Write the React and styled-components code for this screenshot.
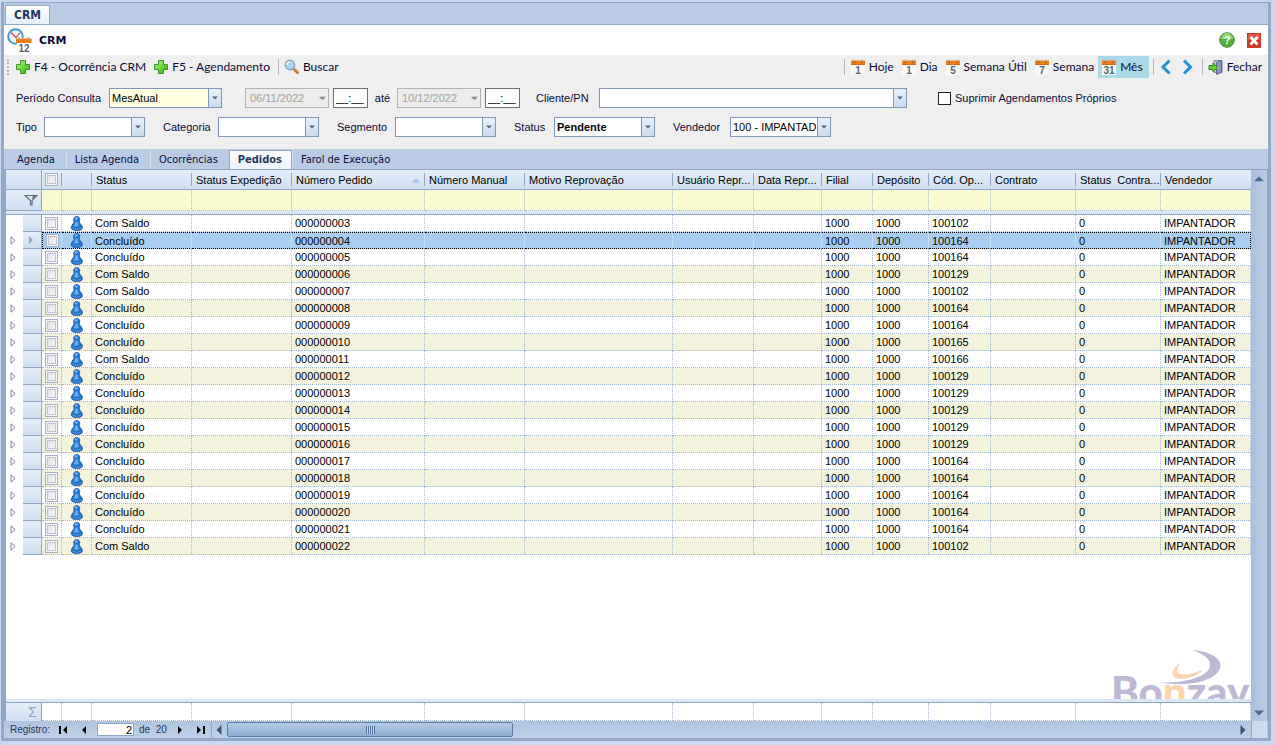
import React, { useState } from "react";
import styled, { createGlobalStyle, css } from "styled-components";

const COLUMNS = [
  { key: "expand", width: 17 },
  { key: "marker", width: 19 },
  { key: "check", width: 20 },
  { key: "icon", width: 30 },
  { key: "status", width: 100, title: "Status" },
  { key: "expedicao", width: 100, title: "Status Expedição" },
  { key: "pedido", width: 133, title: "Número Pedido", sorted: true },
  { key: "manual", width: 100, title: "Número Manual" },
  { key: "motivo", width: 148, title: "Motivo Reprovação" },
  { key: "usuario", width: 81, title: "Usuário Repr..." },
  { key: "data", width: 68, title: "Data Repr..." },
  { key: "filial", width: 51, title: "Filial" },
  { key: "deposito", width: 56, title: "Depósito" },
  { key: "operacao", width: 62, title: "Cód. Op..." },
  { key: "contrato", width: 85, title: "Contrato" },
  { key: "statusContrato", width: 85, title: "Status  Contra..." },
  { key: "vendedor", title: "Vendedor" },
];

const DATA_COLUMNS = COLUMNS.slice(4);

const ORDERS = [
  ["000000003", "Com Saldo", "100102"],
  ["000000004", "Concluído", "100164"],
  ["000000005", "Concluído", "100164"],
  ["000000006", "Com Saldo", "100129"],
  ["000000007", "Com Saldo", "100102"],
  ["000000008", "Concluído", "100164"],
  ["000000009", "Concluído", "100164"],
  ["000000010", "Concluído", "100165"],
  ["000000011", "Com Saldo", "100166"],
  ["000000012", "Concluído", "100129"],
  ["000000013", "Concluído", "100129"],
  ["000000014", "Concluído", "100129"],
  ["000000015", "Concluído", "100129"],
  ["000000016", "Concluído", "100129"],
  ["000000017", "Concluído", "100164"],
  ["000000018", "Concluído", "100164"],
  ["000000019", "Concluído", "100164"],
  ["000000020", "Concluído", "100164"],
  ["000000021", "Concluído", "100164"],
  ["000000022", "Com Saldo", "100102"],
].map(([pedido, status, operacao]) => ({
  pedido,
  status,
  operacao,
  filial: "1000",
  deposito: "1000",
  statusContrato: "0",
  vendedor: "IMPANTADOR",
}));

const TABS = ["Agenda", "Lista Agenda", "Ocorrências", "Pedidos", "Farol de Execução"];

const VIEWS = [
  { label: "Hoje", day: "1" },
  { label: "Dia", day: "1" },
  { label: "Semana Útil", day: "5" },
  { label: "Semana", day: "7" },
  { label: "Mês", day: "31" },
];

/* ---------- icons ---------- */

const PlusIcon = () => (
  <svg width="16" height="16" viewBox="0 0 16 16" aria-hidden="true">
    <defs>
      <linearGradient id="plus" x1="0" y1="0" x2="1" y2="1">
        <stop offset="0" stopColor="#c4f590" />
        <stop offset="0.5" stopColor="#6bd838" />
        <stop offset="1" stopColor="#35ab1a" />
      </linearGradient>
    </defs>
    <path
      d="M5.500 1.500h5v4h4v5h-4v4h-5v-4h-4v-5h4z"
      fill="url(#plus)"
      stroke="#3a9427"
      strokeLinejoin="round"
    />
  </svg>
);

const SearchIcon = () => (
  <svg width="16" height="16" viewBox="0 0 16 16" aria-hidden="true">
    <path d="M9.500 9.500l4 4" stroke="#c9772b" strokeWidth="3" strokeLinecap="round" />
    <path d="M9.500 9l3.500 3.500" stroke="#f3b56c" strokeWidth="1" />
    <circle cx="6" cy="6" r="4.700" fill="#a9d8f5" stroke="#8aa6c0" strokeWidth="1.400" />
    <path d="M3 6a3 3 0 0 1 3-3" fill="none" stroke="#fff" strokeWidth="1.400" />
  </svg>
);

const CalendarIcon = ({ day }) => (
  <svg width="16" height="16" viewBox="0 0 16 16" aria-hidden="true">
    <path d="M1 6h14v10H1z" fill="#f8f8f6" />
    <path d="M1 1.500h14V6H1z" fill="#ef7d1a" />
    <path d="M1 5h14v1H1z" fill="#d86a10" />
    <path d="M3.500 0v3M12.500 0v3" stroke="#cfc6bb" strokeWidth="1.200" />
    <path d="M3 3h2M11 3h2" stroke="#8c420a" />
    <text
      x="8"
      y="15"
      textAnchor="middle"
      fontFamily="Liberation Sans, sans-serif"
      fontWeight="bold"
      fontSize="10"
      fill="#5c6670"
    >
      {day}
    </text>
  </svg>
);

const CrmIcon = () => (
  <svg width="25" height="25" viewBox="0 0 25 25" aria-hidden="true">
    <circle cx="8.500" cy="8.500" r="7.300" fill="#eef7fd" stroke="#3f9bd8" strokeWidth="2" />
    <path d="M4 4.500l5 5 4-5" fill="none" stroke="#d8434e" strokeWidth="1.200" />
    <path d="M10 10h15v15H10z" fill="#fff" />
    <path d="M9 10.500h15.500V15H9z" fill="#ee7b19" />
    <path d="M12 9v3M21.500 9v3" stroke="#b9a08a" strokeWidth="1.500" />
    <text
      x="17"
      y="24"
      textAnchor="middle"
      fontFamily="Liberation Sans, sans-serif"
      fontWeight="bold"
      fontSize="10"
      fill="#59636e"
    >
      12
    </text>
  </svg>
);

const ChevronIcon = ({ next }) => (
  <svg width="14" height="16" viewBox="0 0 14 16" aria-hidden="true">
    <path
      d={next ? "M4 1.500L10.500 8 4 14.500" : "M10.500 1.500L4 8l6.500 6.500"}
      fill="none"
      stroke="#1c93dc"
      strokeWidth="3"
    />
  </svg>
);

const ExitIcon = () => (
  <svg width="16" height="16" viewBox="0 0 16 16" aria-hidden="true">
    <path d="M6 1.500h8v12H6z" fill="#c5cbe0" stroke="#7a84a6" />
    <path d="M8.500 3.500l5-2v12l-5 2z" fill="#8c97c2" stroke="#5b6693" />
    <circle cx="10" cy="9" r="0.800" fill="#f2e7a0" />
    <path d="M1 6.500h4V4l4.500 4.500L5 13v-2.500H1z" fill="#5fd02c" stroke="#2b8d19" />
  </svg>
);

const HelpIcon = () => (
  <svg width="16" height="16" viewBox="0 0 16 16" aria-hidden="true">
    <circle cx="8" cy="8" r="7.300" fill="#51b035" stroke="#5c7d55" />
    <path d="M2 7a6 6 0 0 1 12 0z" fill="#8ed873" />
    <text
      x="8"
      y="12"
      textAnchor="middle"
      fontFamily="Liberation Sans, sans-serif"
      fontWeight="bold"
      fontSize="11"
      fill="#fff"
    >
      ?
    </text>
  </svg>
);

const CloseIcon = () => (
  <svg width="14" height="15" viewBox="0 0 14 15" aria-hidden="true">
    <path d="M0 0h14v15H0z" fill="#c83a2c" />
    <path d="M1 1h12v6H1z" fill="#d8574a" />
    <path d="M3.500 4l7 7.500M10.500 4l-7 7.500" stroke="#fff" strokeWidth="2.600" />
  </svg>
);

const PawnIcon = () => (
  <svg width="14" height="15" viewBox="0 0 14 15" aria-hidden="true">
    <path
      d="M3.800 4.500C3 2.200 4.500.500 6.700.500s3.700 1.700 2.900 4c-.5 1.300 0 2.500 1 3.500 1.300 1.300 1.800 2.400 1.800 3.900 0 1.700-2.500 2.600-5.500 2.600s-5.700-.9-5.700-2.600c0-1.500.6-2.600 1.700-3.900 1-1.100 1.300-2.300.9-3.500z"
      fill="#2273cf"
      stroke="#1b4f91"
      strokeWidth="0.700"
    />
    <ellipse cx="6.200" cy="2.500" rx="1.700" ry="1.200" fill="#6db0f0" />
    <path d="M5.300 5.500h2.400l1 4.500c-1.500 1-3.600 1-5 0 1-1.500 1.500-3 1.600-4.500z" fill="#62adf2" />
    <path d="M2.500 12c2 1.500 6.500 1.500 8.500 0" fill="none" stroke="#4f9ae3" />
  </svg>
);

const FilterIcon = () => (
  <svg width="14" height="12" viewBox="0 0 14 12" aria-hidden="true">
    <path d="M1 1.500h12L8 6.500V11H6.500V6.500z" fill="#dfe8f2" stroke="#66707f" strokeWidth="1.200" />
    <path d="M9 1.500h3.500L8 6z" fill="#66707f" />
  </svg>
);

const ExpandIcon = () => (
  <svg width="6" height="9" viewBox="0 0 6 9" aria-hidden="true">
    <path d="M1 0.800l4 3.700-4 3.700z" fill="#fff" stroke="#7d8794" />
  </svg>
);

const Triangle = ({ dir, color = "#000", size = 8 }) => {
  const paths = {
    up: "M0 6.500L4 2.500l4 4z",
    down: "M0 2L4 6l4-4z",
    left: "M6 0L2 4l4 4z",
    right: "M2 0l4 4-4 4z",
    first: "M0 0h2v8H0zM8 0L4 4l4 4z",
    last: "M6 0h2v8H6zM0 0l4 4-4 4z",
  };
  return (
    <svg width={size} height={size} viewBox="0 0 8 8" aria-hidden="true">
      <path d={paths[dir]} fill={color} />
    </svg>
  );
};

const Watermark = () => (
  <WatermarkSvg width="141" height="51" viewBox="0 0 141 51">
    <path
      d="M82 2c17 1 29 8 28.500 16C109 31 84 40 50 34.500 76 35 98 29 100 18 101 11 94 6 82 2z"
      fill="#bdb9d5"
    />
    <path d="M71 14c-6 5-9 9-8.500 12 1 8 21 6 31.500-5-10 5-21 7-25.500 4-2.500-2-1-6 2.500-11z" fill="#fbd3ad" />
    <text x="1" y="59" fontFamily="Lato, sans-serif" fontWeight="900" fontSize="42" fill="#bdb9d5">
      Bo<tspan fill="#fbd3ad">n</tspan>zay
    </text>
  </WatermarkSvg>
);

/* ---------- page ---------- */

const Combo = ({ id, value, width, tone, bold }) => (
  <ComboBox $width={width}>
    <ComboSelect id={id} defaultValue={value} $tone={tone} $bold={bold}>
      <option>{value}</option>
    </ComboSelect>
    <ComboArrow>
      <Triangle dir="down" color="#5b6675" size={6} />
    </ComboArrow>
  </ComboBox>
);

const DateTime = ({ name, date }) => (
  <DatePair>
    <ComboBox $width={84}>
      <DateInput aria-label={`Data ${name}`} defaultValue={date} disabled />
      <ComboArrow $plain>
        <Triangle dir="down" color="#8a8a8a" size={7} />
      </ComboArrow>
    </ComboBox>
    <TimeInput aria-label={`Hora ${name}`} defaultValue="__:__" />
  </DatePair>
);

const Grid = () => {
  const [selected, setSelected] = useState("000000004");

  return (
    <Table>
      <colgroup>
        {COLUMNS.map((col) => (
          <Col key={col.key} $width={col.width} />
        ))}
      </colgroup>
      <thead>
        <tr>
          <CornerHead colSpan={2} />
          <HeadCell>
            <HeadText $tight>
              <GridCheck type="checkbox" aria-label="Selecionar todos" />
            </HeadText>
          </HeadCell>
          <HeadCell>
            <HeadText />
          </HeadCell>
          {DATA_COLUMNS.map((col) => (
            <HeadCell key={col.key}>
              <HeadText>
                <span>{col.title}</span>
                {col.sorted && <Triangle dir="up" color="#9cc0ea" />}
              </HeadText>
            </HeadCell>
          ))}
        </tr>
        <tr>
          <FilterHead colSpan={2}>
            <FilterIcon />
          </FilterHead>
          {COLUMNS.slice(2).map((col) => (
            <FilterCell key={col.key} />
          ))}
        </tr>
        <tr>
          <Splitter colSpan={COLUMNS.length} />
        </tr>
      </thead>
      <tbody>
        {ORDERS.map((order, index) => (
          <Row
            key={order.pedido}
            $selected={order.pedido === selected}
            onClick={() => setSelected(order.pedido)}
          >
            <ExpandCell>{index > 0 && <ExpandIcon />}</ExpandCell>
            <MarkerCell>
              {order.pedido === selected && <Triangle dir="right" color="#8ea6c4" />}
            </MarkerCell>
            <Cell $center>
              <GridCheck type="checkbox" aria-label={`Selecionar ${order.pedido}`} />
            </Cell>
            <Cell $center>
              <PawnIcon />
            </Cell>
            {DATA_COLUMNS.map((col) => (
              <Cell key={col.key}>{order[col.key]}</Cell>
            ))}
          </Row>
        ))}
      </tbody>
    </Table>
  );
};

const Summary = () => (
  <Table>
    <colgroup>
      {COLUMNS.map((col) => (
        <Col key={col.key} $width={col.width} />
      ))}
    </colgroup>
    <tbody>
      <tr>
        <SigmaCell colSpan={2}>Σ</SigmaCell>
        {COLUMNS.slice(2).map((col) => (
          <SummaryCell key={col.key} />
        ))}
      </tr>
    </tbody>
  </Table>
);

const App = () => {
  const [tab, setTab] = useState("Pedidos");
  const [view, setView] = useState("Mês");

  return (
    <Page>
      <GlobalStyle />
      <Frame>
        <WindowTabs>
          <WindowTab>CRM</WindowTab>
        </WindowTabs>

        <TitleBar>
          <CrmIcon />
          <Title>CRM</Title>
          <IconButton aria-label="Ajuda">
            <HelpIcon />
          </IconButton>
          <IconButton aria-label="Fechar janela">
            <CloseIcon />
          </IconButton>
        </TitleBar>

        <Toolbar>
          <Grip />
          <ToolButton>
            <PlusIcon />
            F4 - Ocorrência CRM
          </ToolButton>
          <ToolButton>
            <PlusIcon />
            F5 - Agendamento
          </ToolButton>
          <Separator />
          <ToolButton>
            <SearchIcon />
            Buscar
          </ToolButton>
          <Push />
          <Separator />
          {VIEWS.map(({ label, day }) => (
            <ToolButton key={label} $active={label === view} onClick={() => setView(label)}>
              <CalendarIcon day={day} />
              {label}
            </ToolButton>
          ))}
          <Separator />
          <ToolButton aria-label="Anterior">
            <ChevronIcon />
          </ToolButton>
          <ToolButton aria-label="Próximo">
            <ChevronIcon next />
          </ToolButton>
          <Separator />
          <ToolButton>
            <ExitIcon />
            Fechar
          </ToolButton>
        </Toolbar>

        <Filters>
          <FilterRow $gap={16}>
            <Field>
              <Label htmlFor="periodo" $width={93}>
                Período Consulta
              </Label>
              <Combo id="periodo" value="MesAtual" width={113} tone="#ffffe1" />
            </Field>
            <Dates>
              <DateTime name="inicial" date="06/11/2022" />
              <Until>até</Until>
              <DateTime name="final" date="10/12/2022" />
            </Dates>
            <Field>
              <Label htmlFor="cliente" $width={63}>
                Cliente/PN
              </Label>
              <Combo id="cliente" value="" width={308} />
            </Field>
            <CheckLabel>
              <CheckInput type="checkbox" />
              Suprimir Agendamentos Próprios
            </CheckLabel>
          </FilterRow>
          <FilterRow $gap={18}>
            <Field>
              <Label htmlFor="tipo" $width={28}>
                Tipo
              </Label>
              <Combo id="tipo" value="" width={101} />
            </Field>
            <Field>
              <Label htmlFor="categoria" $width={55}>
                Categoria
              </Label>
              <Combo id="categoria" value="" width={101} />
            </Field>
            <Field>
              <Label htmlFor="segmento" $width={58}>
                Segmento
              </Label>
              <Combo id="segmento" value="" width={101} />
            </Field>
            <Field>
              <Label htmlFor="status" $width={40}>
                Status
              </Label>
              <Combo id="status" value="Pendente" width={101} bold />
            </Field>
            <Field>
              <Label htmlFor="vendedor" $width={57}>
                Vendedor
              </Label>
              <Combo id="vendedor" value="100 - IMPANTADOR" width={101} />
            </Field>
          </FilterRow>
        </Filters>

        <Tabs role="tablist">
          {TABS.map((name) => (
            <Tab
              key={name}
              role="tab"
              aria-selected={name === tab}
              $active={name === tab}
              onClick={() => setTab(name)}
            >
              {name}
            </Tab>
          ))}
        </Tabs>

        <GridArea>
          <GridMain>
            <GridBody>
              <Grid />
              <Watermark />
            </GridBody>
            <SummaryGap />
            <Summary />
          </GridMain>
          <VerticalScroll>
            <Triangle dir="up" color="#536d95" size={10} />
            <Triangle dir="down" color="#536d95" size={10} />
          </VerticalScroll>
        </GridArea>

        <BottomBar>
          <Navigator>
            <NavText as="label" htmlFor="registro">
              Registro:
            </NavText>
            <NavButton aria-label="Primeiro">
              <Triangle dir="first" />
            </NavButton>
            <NavButton aria-label="Anterior">
              <Triangle dir="left" />
            </NavButton>
            <PageInput id="registro" defaultValue="2" />
            <NavText>de&nbsp; 20</NavText>
            <NavButton aria-label="Próximo">
              <Triangle dir="right" />
            </NavButton>
            <NavButton aria-label="Último">
              <Triangle dir="last" />
            </NavButton>
          </Navigator>
          <HorizontalScroll>
            <Triangle dir="left" color="#3d5373" size={10} />
            <Thumb>
              <ThumbGrip />
            </Thumb>
            <Push />
            <Triangle dir="right" color="#3d5373" size={10} />
          </HorizontalScroll>
          <Corner />
        </BottomBar>
      </Frame>
    </Page>
  );
};

export default App;

const GlobalStyle = createGlobalStyle`
  * {
    box-sizing: border-box;
  }

  body {
    margin: 0;
    background: #c8d9ef;
    color: #0b0b3b;
    font: 11px/16px "Liberation Sans", Arial, sans-serif;
  }

  button, input, select {
    margin: 0;
    font: inherit;
    color: inherit;
  }

  button {
    padding: 0;
    border: 0;
    background: none;
  }

  svg {
    display: block;
    flex: none;
  }
`;

const Page = styled.div`
  display: flex;
  min-height: 100vh;
  padding: 2px 4px 4px 1px;
`;

const Frame = styled.main`
  display: flex;
  flex: 1;
  flex-direction: column;
  min-width: 0;
  border: 3px solid #93a8c7;
  border-top-width: 1px;
  background: #bacce4;
`;

const WindowTabs = styled.div`
  display: flex;
  align-items: flex-end;
  height: 22px;
  padding-left: 1px;
  border-bottom: 1px solid #8fa6c4;
`;

const WindowTab = styled.div`
  height: 19px;
  padding: 0 8px;
  border: 1px solid #8fa6c4;
  border-bottom: 0;
  border-radius: 2px 2px 0 0;
  background: linear-gradient(#fff, #e4eefa);
  color: #1e395b;
  font: bold 12px/19px "DejaVu Sans Condensed", "DejaVu Sans", sans-serif;
`;

const TitleBar = styled.header`
  display: flex;
  align-items: center;
  gap: 7px;
  height: 30px;
  padding: 0 7px 0 3px;
  background: #fff;
`;

const Title = styled.h1`
  flex: 1;
  margin: 0;
  padding-top: 2px;
  font: bold 11px/16px "DejaVu Sans", sans-serif;
`;

const IconButton = styled.button`
  display: flex;
  margin-left: 5px;
`;

const Toolbar = styled.div`
  display: flex;
  align-items: center;
  height: 25px;
  padding: 0 2px 2px 3px;
  background: #efefef;
`;

const Grip = styled.div`
  width: 3px;
  height: 16px;
  margin-right: 2px;
  border-left: 2px dotted #b4b4b4;
`;

const ToolButton = styled.button`
  display: flex;
  align-items: center;
  gap: 3px;
  height: 22px;
  padding: 0 4px 0 3px;
  background: ${(props) => (props.$active ? "#add8e6" : "none")};
  font: 12px/16px Lato, "Open Sans", sans-serif;
  white-space: nowrap;

  ${(props) =>
    props.$active &&
    css`
      padding-right: 6px;
    `}
`;

const Separator = styled.div`
  width: 1px;
  height: 16px;
  margin: 0 2px 0 4px;
  background: #b5b5b8;
`;

const Push = styled.div`
  flex: 1;
`;

const Filters = styled.section`
  display: flex;
  flex-direction: column;
  gap: 9px;
  height: 69px;
  padding: 8px 12px;
  background: #efefef;
`;

const FilterRow = styled.div`
  display: flex;
  align-items: center;
  gap: ${(props) => props.$gap}px;
  height: 20px;
`;

const Field = styled.div`
  display: flex;
  align-items: center;
`;

const Label = styled.label`
  flex: none;
  width: ${(props) => props.$width}px;
`;

const ComboBox = styled.div`
  position: relative;
  width: ${(props) => props.$width}px;
  height: 20px;
`;

const ComboSelect = styled.select`
  appearance: none;
  display: block;
  width: 100%;
  height: 20px;
  padding: 0 14px 0 2px;
  border: 1px solid #7f97ba;
  border-radius: 0;
  background: ${(props) => props.$tone || "#fff"};
  color: #000;
  font-weight: ${(props) => (props.$bold ? "bold" : "normal")};
`;

const ComboArrow = styled.span`
  position: absolute;
  top: 0;
  right: 0;
  display: flex;
  align-items: center;
  justify-content: center;
  width: 14px;
  height: 20px;
  border: 1px solid #7f97ba;
  border-radius: 0 2px 2px 0;
  background: linear-gradient(#e9f1fb, #c9dbf0);
  pointer-events: none;

  ${(props) =>
    props.$plain &&
    css`
      border: 0;
      background: none;
    `}
`;

const DatePair = styled.div`
  display: flex;
  gap: 4px;
`;

const Dates = styled.div`
  display: flex;
  align-items: center;
  padding-left: 7px;
`;

const Until = styled.span`
  width: 29px;
  text-align: center;
`;

const DateInput = styled.input`
  width: 100%;
  height: 20px;
  padding: 0 4px;
  border: 1px solid #b0b4ba;
  background: #ececec;
  color: #a3a3a0;
`;

const TimeInput = styled.input`
  width: 35px;
  height: 20px;
  padding: 0 2px;
  border: 1px solid #6f6f6f;
  background: #fff;
  color: #000;
`;

const CheckLabel = styled.label`
  display: flex;
  align-items: center;
  gap: 4px;
  padding-left: 15px;
  white-space: nowrap;
`;

const CheckInput = styled.input`
  appearance: none;
  width: 13px;
  height: 13px;
  border: 1px solid #222;
  background: #fff;
`;

const Tabs = styled.div`
  display: flex;
  align-items: flex-end;
  height: 21px;
  padding-left: 5px;
  border-bottom: 1px solid #8fa6c4;
`;

const Tab = styled.button`
  height: 19px;
  padding: 0 11px 0 8px;
  font: 11px/18px "DejaVu Sans Condensed", "DejaVu Sans", sans-serif;
  white-space: nowrap;

  & + & {
    border-left: 1px solid #d6e1f0;
  }

  ${(props) =>
    props.$active &&
    css`
      && {
        padding: 0 9px 0 8px;
        border: 1px solid #8fa6c4;
        border-bottom: 0;
      }
      border-radius: 2px 2px 0 0;
      background: linear-gradient(#fff, #eaf2fb);
      color: #1e395b;
      font-weight: bold;
    `}
`;

const GridArea = styled.section`
  display: flex;
  flex: 1;
  padding: 0 1px 0 2px;
  background: #93a8c7;
`;

const GridMain = styled.div`
  display: flex;
  flex: 1;
  flex-direction: column;
  min-width: 0;
  background: #fff;
`;

const GridBody = styled.div`
  position: relative;
  flex: 1;
  overflow: hidden;
`;

const WatermarkSvg = styled.svg`
  position: absolute;
  right: 0;
  bottom: 0;
`;

const Table = styled.table`
  width: 100%;
  table-layout: fixed;
  border-collapse: separate;
  border-spacing: 0;
  color: #000;
`;

const Col = styled.col`
  width: ${(props) => (props.$width ? `${props.$width}px` : "auto")};
`;

const headBackground = css`
  background: linear-gradient(#e4eefa, #cfdff0);
`;

const HeadText = styled.div`
  display: flex;
  align-items: center;
  justify-content: space-between;
  height: 13px;
  padding: ${(props) => (props.$tight ? "0 3px" : "0 4px")};
  border-right: 1px solid #8fa6c4;
`;

const HeadCell = styled.th`
  height: 20px;
  padding: 0;
  border-bottom: 1px solid #8fa6c4;
  ${headBackground}
  font-weight: normal;
  text-align: left;
  white-space: pre;

  &:last-child ${HeadText} {
    border-right: 0;
  }
`;

const CornerHead = styled.th`
  height: 20px;
  padding: 0;
  border-right: 1px solid #8fa6c4;
  border-bottom: 1px solid #8fa6c4;
  ${headBackground}
`;

const FilterHead = styled.th`
  height: 21px;
  padding: 0 0 0 18px;
  border-right: 1px solid #8fa6c4;
  border-bottom: 1px solid #8fa6c4;
  ${headBackground}
`;

const FilterCell = styled.th`
  padding: 0;
  border-right: 1px dotted #9fb9d4;
  border-bottom: 1px dotted #9fb9d4;
  background: #fafad2;
`;

const Splitter = styled.th`
  height: 4px;
  padding: 0;
  border-bottom: 1px solid #8fa6c4;
  background: #dbe7f5;
`;

const Cell = styled.td`
  height: 17px;
  padding: 0 3px;
  border-right: 1px dotted #9fb9d4;
  border-bottom: 1px dotted #9fb9d4;
  line-height: 15px;
  white-space: nowrap;

  & > svg,
  & > input {
    margin: ${(props) => (props.$center ? "0 auto" : "0")};
  }
`;

const ExpandCell = styled.td`
  padding: 0 0 0 4px;
  background: #fff;
`;

const MarkerCell = styled.td`
  padding: 0 0 0 4px;
  border-right: 1px solid #8fa6c4;
  border-bottom: 1px solid #8fa6c4;
  ${headBackground}
`;

const Row = styled.tr`
  height: 17px;
  background: #fff;

  &:nth-child(even) {
    background: #f3f2dd;
  }

  ${(props) =>
    props.$selected &&
    css`
      && {
        background: #a9cdf0;
      }

      ${Cell} {
        border-top: 1px dotted #000;
        border-right-color: #e3f0fc;
        border-bottom-color: #000;
        line-height: 14px;
      }

      ${Cell}:nth-child(3) {
        border-left: 1px dotted #000;
        padding: 0 2px;
      }

      ${Cell}:last-child {
        border-right-color: #000;
      }
    `}
`;

const GridCheck = styled.input`
  appearance: none;
  display: block;
  width: 13px;
  height: 13px;
  margin: 0 auto;
  border: 1px solid #a3b2c8;
  background: linear-gradient(135deg, #dfe0e4, #fafafa);
  box-shadow: inset 0 0 0 1px #f7f7f7, inset 0 0 0 2px #bfc3cf;
`;

const SummaryGap = styled.div`
  height: 4px;
  border-bottom: 1px solid #8fa6c4;
  background: #dbe7f5;
`;

const SigmaCell = styled.td`
  height: 18px;
  padding: 0 4px 0 0;
  border-right: 1px solid #8fa6c4;
  ${headBackground}
  color: #93a4bb;
  font-size: 14px;
  line-height: 16px;
  text-align: right;
`;

const SummaryCell = styled.td`
  padding: 0;
  border-right: 1px dotted #9fb9d4;
  border-bottom: 1px dotted #9fb9d4;
`;

const VerticalScroll = styled.div`
  display: flex;
  flex-direction: column;
  align-items: center;
  justify-content: space-between;
  width: 16px;
  padding: 3px 0;
  background: linear-gradient(90deg, #a9bfd9, #bacde5);
`;

const BottomBar = styled.footer`
  display: flex;
  height: 17px;
  padding: 0 1px 0 2px;
  background: linear-gradient(#b0c5de, #bdd0e8);
`;

const Navigator = styled.div`
  display: flex;
  align-items: center;
  gap: 5px;
  width: 206px;
  padding-left: 4px;
  border-right: 1px solid #8fa6c4;
`;

const NavText = styled.span`
  color: #1e395b;
  font-size: 10px;
  line-height: 16px;
  white-space: nowrap;
`;

const NavButton = styled.button`
  display: flex;
  align-items: center;
  justify-content: center;
  width: 16px;
  height: 16px;
`;

const PageInput = styled.input`
  width: 37px;
  height: 13px;
  padding: 0 1px;
  border: 1px solid #8fa6c4;
  background: #fff;
  color: #000;
  text-align: right;
`;

const HorizontalScroll = styled.div`
  display: flex;
  flex: 1;
  align-items: center;
  gap: 3px;
  padding: 0 3px 0 2px;
`;

const Thumb = styled.div`
  display: flex;
  align-items: center;
  justify-content: center;
  width: 286px;
  height: 15px;
  border: 1px solid #5f7ca6;
  border-radius: 2px;
  background: linear-gradient(#b5cae6, #8facd1);
`;

const ThumbGrip = styled.div`
  width: 9px;
  height: 8px;
  background: repeating-linear-gradient(90deg, #54709a 0 1px, #c3d4ea 1px 2px);
`;

const Corner = styled.div`
  width: 16px;
  border-left: 1px solid #8fa6c4;
  background: #ccdcf0;
`;
